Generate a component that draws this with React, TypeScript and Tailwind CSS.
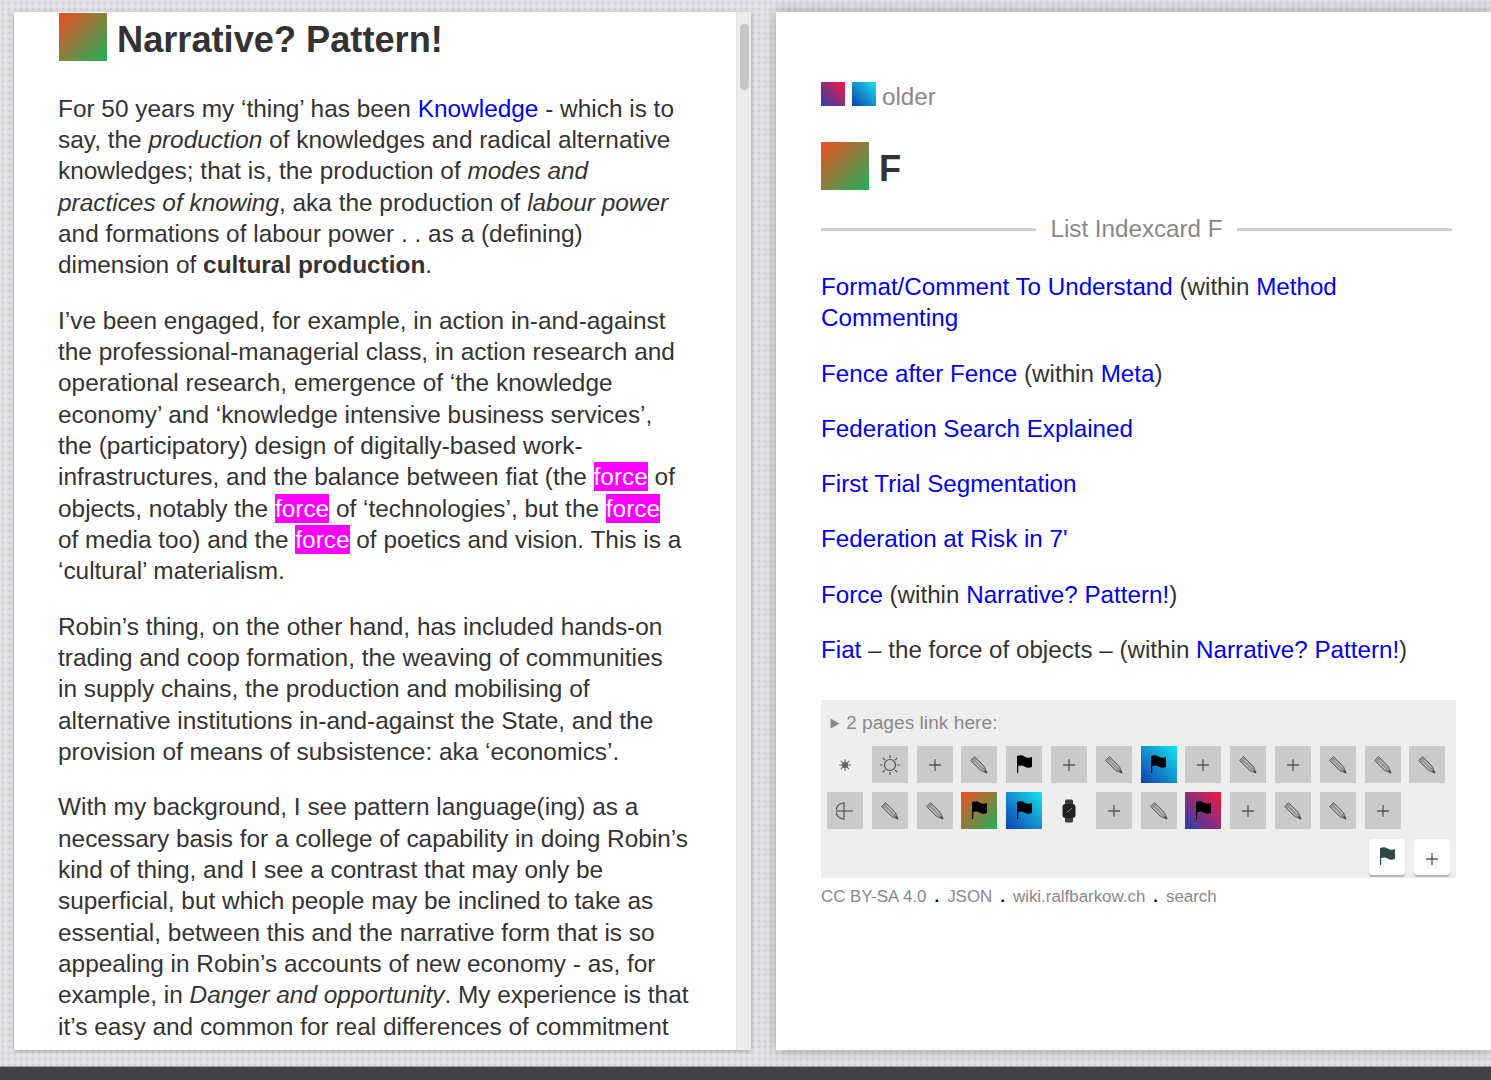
import React from 'react';

const linkClass = 'text-[#0000ee]';

const Force = () => <span className="bg-[#ff00ff] text-white py-px">force</span>;

const PencilIcon = () => (
  <svg width="20" height="20" viewBox="0 0 20 20" fill="none">
    <path d="M1.5 5.5 L5.5 1.5 L15.5 11.5 L18 18 L11.5 15.5 Z" fill="#969696" stroke="#6a6a6a" strokeWidth="1" strokeLinejoin="round" />
    <path d="M5 7 L12.5 14.5 M7 5 L14.5 12.5" stroke="#c4c4c4" strokeWidth="1" />
    <path d="M15.5 15.5 L18 18" stroke="#444" strokeWidth="1.4" />
  </svg>
);

const PlusIcon = () => (
  <svg width="14" height="14" viewBox="0 0 14 14" fill="none">
    <path d="M7 1 V13 M1 7 H13" stroke="#555" strokeWidth="1.3" />
  </svg>
);

const FlagIcon = ({ color = '#000' }: { color?: string }) => (
  <svg width="17" height="20" viewBox="0 0 17 20" fill="none">
    <path d="M1 1 C4 0 6 0 8.5 1.5 C11 3 13.5 3 16 2 V12 C13.5 13 11 13 8.5 11.5 C6 10 4 10.5 2.2 11 V18 H1 Z" fill={color} />
  </svg>
);

const SunIcon = () => (
  <svg width="22" height="22" viewBox="0 0 22 22" fill="none" stroke="#555" strokeWidth="1.2">
    <circle cx="11" cy="11" r="5.5" />
    <path d="M11 1 V4 M11 18 V21 M1 11 H4 M18 11 H21 M3.8 3.8 L6 6 M16 16 L18.2 18.2 M18.2 3.8 L16 6 M6 16 L3.8 18.2" />
  </svg>
);

const StarIcon = () => (
  <svg width="14" height="14" viewBox="0 0 14 14" fill="none" stroke="#666" strokeWidth="1.1">
    <circle cx="7" cy="7" r="2.5" fill="#666" />
    <path d="M7 1 V13 M1 7 H13 M2.8 2.8 L11.2 11.2 M11.2 2.8 L2.8 11.2" />
  </svg>
);

const HalfCircleIcon = () => (
  <svg width="18" height="20" viewBox="0 0 18 20" fill="none" stroke="#666" strokeWidth="1.4">
    <path d="M8 2 A8 8 0 0 0 8 18 Z" />
    <path d="M1 10 H17" />
  </svg>
);

const WatchIcon = () => (
  <svg width="16" height="24" viewBox="0 0 16 24" fill="none">
    <rect x="4" y="0.5" width="8" height="23" rx="1.5" fill="#3a3a3a" />
    <rect x="1.5" y="5" width="13" height="14" rx="3" fill="#222" />
    <path d="M8 12 L11 9 M8 12 L5.5 13.5" stroke="#999" strokeWidth="0.8" />
  </svg>
);

type Neighbor = { icon: 'pencil' | 'plus' | 'flag' | 'sun' | 'star' | 'half' | 'watch'; bg?: string };

const iconFor = (icon: Neighbor['icon']) => {
  if (icon === 'pencil') return <PencilIcon />;
  if (icon === 'plus') return <PlusIcon />;
  if (icon === 'flag') return <FlagIcon />;
  if (icon === 'sun') return <SunIcon />;
  if (icon === 'star') return <StarIcon />;
  if (icon === 'half') return <HalfCircleIcon />;
  return <WatchIcon />;
};

const greenFade = 'bg-linear-to-br/srgb from-[#f04e23] to-[#1fb25a]';
const blueFade = 'bg-linear-to-tr/srgb from-[#0d3fb0] to-[#17e4ee]';
const pinkFade = 'bg-linear-to-tr/srgb from-[#2a40b0] to-[#f8183e]';

const rowOne: Neighbor[] = [
  { icon: 'star', bg: 'bg-transparent' },
  { icon: 'sun' },
  { icon: 'plus' },
  { icon: 'pencil' },
  { icon: 'flag' },
  { icon: 'plus' },
  { icon: 'pencil' },
  { icon: 'flag', bg: blueFade },
  { icon: 'plus' },
  { icon: 'pencil' },
  { icon: 'plus' },
  { icon: 'pencil' },
  { icon: 'pencil' },
  { icon: 'pencil' },
];

const rowTwo: Neighbor[] = [
  { icon: 'half' },
  { icon: 'pencil' },
  { icon: 'pencil' },
  { icon: 'flag', bg: greenFade },
  { icon: 'flag', bg: blueFade },
  { icon: 'watch', bg: 'bg-transparent' },
  { icon: 'plus' },
  { icon: 'pencil' },
  { icon: 'flag', bg: pinkFade },
  { icon: 'plus' },
  { icon: 'pencil' },
  { icon: 'pencil' },
  { icon: 'plus' },
];

const NeighborRow = ({ items }: { items: Neighbor[] }) => (
  <div className="flex gap-[8.8px]">
    {items.map((item, i) => (
      <div key={i} className={`w-[36px] h-[37px] flex items-center justify-center ${item.bg ?? 'bg-[#cacaca]'}`}>
        {iconFor(item.icon)}
      </div>
    ))}
  </div>
);

const patternBg =
  'bg-[#dfdfe2] bg-[radial-gradient(#cfcfd3_1px,transparent_1.5px),radial-gradient(#ecedef_1px,transparent_1.5px)] bg-[length:6px_6px] bg-[position:0_0,3px_3px]';

const Dot = () => <span className="text-black font-bold mx-[8px]">.</span>;

export default function App() {
  return (
    <div className={`w-[1491px] h-[1080px] overflow-hidden flex flex-col font-['Liberation_Sans',Arial,sans-serif] ${patternBg}`}>
      <div className="flex-none flex gap-[25px] pt-3 pl-[14px] h-[1050px]">
        {/* left page */}
        <div className="relative w-[737px] bg-white overflow-hidden shadow-[0_1px_4px_rgba(0,0,0,0.3)]">
          <div className="pl-[44px] w-[720px] text-[24.4px] leading-[31.35px] text-[#333] whitespace-nowrap">
            <div className="flex items-center gap-[10px] h-[49px] pt-px ml-px">
              <div className={`w-[48px] h-[48px] flex-none ${greenFade}`} />
              <h1 className="text-[36.2px] leading-none font-bold text-[#333] pt-[6px]">Narrative? Pattern!</h1>
            </div>
            <p className="mt-[31.5px]">
              For 50 years my ‘thing’ has been <span className={linkClass}>Knowledge</span> - which is to
              <br />
              say, the <em>production</em> of knowledges and radical alternative
              <br />
              knowledges; that is, the production of <em>modes and</em>
              <br />
              <em>practices of knowing</em>, aka the production of <em>labour power</em>
              <br />
              and formations of labour power . . as a (defining)
              <br />
              dimension of <strong>cultural production</strong>.
            </p>
            <p className="mt-6">
              I’ve been engaged, for example, in action in-and-against
              <br />
              the professional-managerial class, in action research and
              <br />
              operational research, emergence of ‘the knowledge
              <br />
              economy’ and ‘knowledge intensive business services’,
              <br />
              the (participatory) design of digitally-based work-
              <br />
              infrastructures, and the balance between fiat (the <Force /> of
              <br />
              objects, notably the <Force /> of ‘technologies’, but the <Force />
              <br />
              of media too) and the <Force /> of poetics and vision. This is a
              <br />
              ‘cultural’ materialism.
            </p>
            <p className="mt-6">
              Robin’s thing, on the other hand, has included hands-on
              <br />
              trading and coop formation, the weaving of communities
              <br />
              in supply chains, the production and mobilising of
              <br />
              alternative institutions in-and-against the State, and the
              <br />
              provision of means of subsistence: aka ‘economics’.
            </p>
            <p className="mt-6">
              With my background, I see pattern language(ing) as a
              <br />
              necessary basis for a college of capability in doing Robin’s
              <br />
              kind of thing, and I see a contrast that may only be
              <br />
              superficial, but which people may be inclined to take as
              <br />
              essential, between this and the narrative form that is so
              <br />
              appealing in Robin’s accounts of new economy - as, for
              <br />
              example, in <em>Danger and opportunity</em>. My experience is that
              <br />
              it’s easy and common for real differences of commitment
            </p>
          </div>
          {/* scrollbar */}
          <div className="absolute right-0 top-0 bottom-0 w-[15px] bg-[#ededed] border-l border-[#e2e2e2]">
            <div className="mt-[12px] ml-[3px] w-[9px] h-[66px] rounded-full bg-[#c6c6c6]" />
          </div>
        </div>

        {/* right page */}
        <div className="flex-1 bg-white pl-[45px] shadow-[0_0_12px_rgba(0,0,0,0.3)] text-[24.2px] leading-[31.3px] text-[#333]">
          <div className="flex items-end pt-[70px] h-[94px]">
            <div className={`w-[24px] h-[24px] ${pinkFade}`} />
            <div className={`w-[24px] h-[24px] ml-[7px] ${blueFade}`} />
            <span className="ml-[6px] text-[#888] leading-[24px] translate-y-[3px]">older</span>
          </div>
          <div className="flex items-center gap-[10px] mt-[36px] h-[48px]">
            <div className={`w-[48px] h-[48px] ${greenFade}`} />
            <h2 className="text-[36.2px] leading-none font-bold pt-[6px]">F</h2>
          </div>
          <div className="flex items-center w-[631px] mt-[23px] h-[32px] text-[#888]">
            <div className="flex-1 h-[3px] bg-[#d0d0d0]" />
            <span className="px-[14px]">List Indexcard F</span>
            <div className="flex-1 h-[3px] bg-[#d0d0d0]" />
          </div>
          <div className="w-[635px] mt-[26px] flex flex-col gap-6">
            <p>
              <span className={linkClass}>Format/Comment To Understand</span> (within{' '}
              <span className={linkClass}>Method Commenting</span>
            </p>
            <p>
              <span className={linkClass}>Fence after Fence</span> (within <span className={linkClass}>Meta</span>)
            </p>
            <p className={linkClass}>Federation Search Explained</p>
            <p className={linkClass}>First Trial Segmentation</p>
            <p className={linkClass}>Federation at Risk in 7'</p>
            <p>
              <span className={linkClass}>Force</span> (within <span className={linkClass}>Narrative? Pattern!</span>)
            </p>
            <p>
              <span className={linkClass}>Fiat</span> – the force of objects – (within{' '}
              <span className={linkClass}>Narrative? Pattern!</span>)
            </p>
          </div>
          <div className="w-[635px] h-[178px] mt-[35px] bg-[#eeeeee] pl-[6px] pt-[10px] relative">
            <div className="text-[19.2px] leading-[26px] text-[#888] pl-[3px] flex items-center">
              <svg width="10" height="11" viewBox="0 0 10 11" className="mr-[6px]">
                <path d="M0.5 0.5 L9.5 5.5 L0.5 10.5 Z" fill="#888" />
              </svg>
              2 pages link here:
            </div>
            <div className="mt-[10px] flex flex-col gap-[9px]">
              <NeighborRow items={rowOne} />
              <NeighborRow items={rowTwo} />
            </div>
            <div className="absolute right-[6px] bottom-[3px] flex gap-[9px]">
              <div className="w-[36px] h-[36px] bg-white rounded-[3px] flex items-center justify-center shadow-[0_2px_1px_rgba(0,0,0,0.25)]">
                <FlagIcon color="#2f4a44" />
              </div>
              <div className="w-[36px] h-[36px] bg-white rounded-[3px] flex items-center justify-center pt-1 shadow-[0_2px_1px_rgba(0,0,0,0.25)]">
                <PlusIcon />
              </div>
            </div>
          </div>
          <div className="mt-[7px] text-[16.9px] leading-[24px] text-[#888]">
            CC BY-SA 4.0
            <Dot />
            JSON
            <Dot />
            wiki.ralfbarkow.ch
            <Dot />
            search
          </div>
        </div>
      </div>
      <div className="h-[16px] flex-none" />
      <div className="flex-1 bg-[#434345] border-t border-[#9a9a9a]" />
    </div>
  );
}
